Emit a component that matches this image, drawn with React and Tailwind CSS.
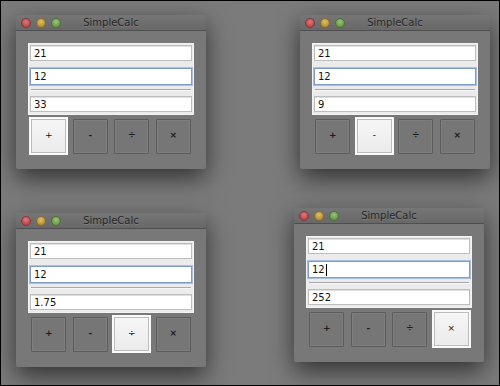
const ops = ["+", "-", "÷", "×"];

function Lights() {
  return (
    <div className="flex items-center gap-[5px] pl-[5px]">
      <span className="h-[10px] w-[10px] rounded-full border border-[#8a3436] bg-[radial-gradient(circle_at_50%_35%,#e07a7c,#b8474b_70%)]" />
      <span className="h-[10px] w-[10px] rounded-full border border-[#8a6a26] bg-[radial-gradient(circle_at_50%_35%,#dcc072,#b69234_70%)]" />
      <span className="h-[10px] w-[10px] rounded-full border border-[#4d7233] bg-[radial-gradient(circle_at_50%_35%,#9cc47c,#6a9a48_70%)]" />
    </div>
  );
}

function Field({ value, focused, cursor }) {
  return (
    <div
      className={`flex items-center bg-white px-[3px] text-[10px] text-[#111] ${
        focused
          ? "h-[17px] border border-[#7d9ccb] shadow-[0_0_0_1px_#a8c0e2]"
          : "h-[16px] border border-[#bdbdbd] shadow-[inset_0_1px_0_#e0e0e0]"
      }`}
    >
      <span>{value}</span>
      {cursor && <span className="ml-px h-[12px] w-px bg-black" />}
    </div>
  );
}

function CalcWindow({ result, active, cursor, className }) {
  return (
    <div
      className={`flex h-[154px] w-[190px] flex-col overflow-hidden rounded-t-[4px] rounded-b-[2px] bg-[#787878] shadow-[0_9px_24px_rgba(0,0,0,0.6)] ${className}`}
    >
      <div className="grid h-[16px] grid-cols-[1fr_auto_1fr] items-center border-b border-[#4f4f4f] bg-gradient-to-b from-[#767676] to-[#686868]">
        <Lights />
        <span className="text-[10px] text-[#262626] [text-shadow:0_1px_0_rgba(255,255,255,0.15)]">
          SimpleCalc
        </span>
        <span />
      </div>
      <div className="flex flex-col px-[12px] pt-[12px]">
        <div className="flex h-[72px] flex-col border border-[#f4f4f4] bg-[#ebebeb] p-[1px]">
          <Field value="21" />
          <div className="mt-[7px]">
            <Field value="12" focused cursor={cursor} />
          </div>
          <div className="mx-[1px] mt-[4px] h-[2px] border-t border-[#a9a9a9] bg-[#f7f7f7]" />
          <div className="mt-[5px]">
            <Field value={result} />
          </div>
        </div>
        <div className="mt-[2px] flex h-[38px]">
          {ops.map((op, i) =>
            i === active ? (
              <div key={op} className="flex flex-1 items-center justify-center">
                <div className="flex h-[38px] w-[39px] items-center justify-center border-2 border-[#fafafa] bg-gradient-to-b from-[#f6f6f6] to-[#ebebeb] text-[9px] text-[#111] shadow-[inset_0_0_0_1px_#bcbcbc]">
                  {op}
                </div>
              </div>
            ) : (
              <div key={op} className="flex flex-1 items-center justify-center">
                <div className="flex h-[35px] w-[35px] items-center justify-center rounded-[1px] border border-[#5c5c5c] bg-[#767676] text-[9px] font-bold text-[#1c1c1c] shadow-[inset_0_0_0_1px_#7e7e7e]">
                  {op}
                </div>
              </div>
            )
          )}
        </div>
      </div>
    </div>
  );
}

export default function App() {
  return (
    <div className="h-[386px] w-[500px] overflow-hidden border border-black bg-[#7b7b7b] font-['DejaVu_Sans',sans-serif]">
      <div className="flex items-start pt-[14px]">
        <CalcWindow result="33" active={0} className="ml-[15px]" />
        <CalcWindow result="9" active={1} className="ml-[94px]" />
      </div>
      <div className="flex items-start">
        <CalcWindow result="1.75" active={2} className="ml-[15px] mt-[44px]" />
        <CalcWindow result="252" active={3} cursor className="ml-[88px] mt-[39px]" />
      </div>
    </div>
  );
}
